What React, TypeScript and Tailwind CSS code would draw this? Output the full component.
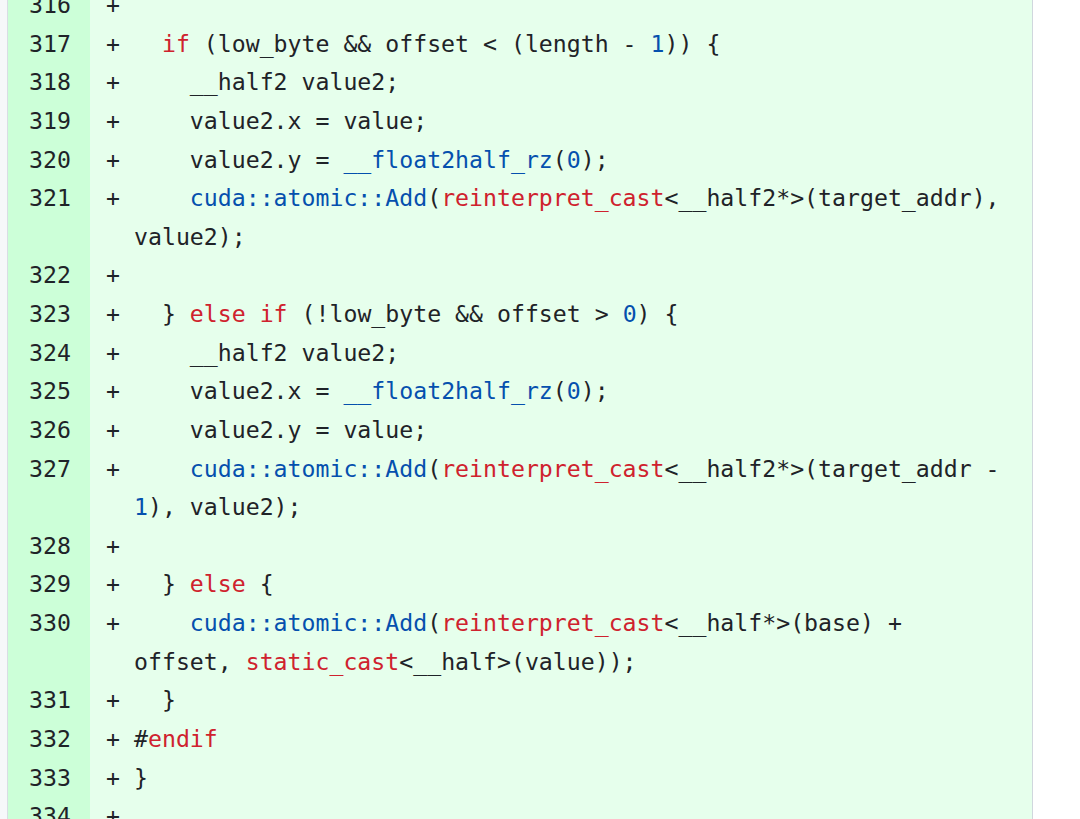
type Tok = [string, 'r' | 'b' | 'd']

const R = (s: string): Tok => [s, 'r']
const B = (s: string): Tok => [s, 'b']
const D = (s: string): Tok => [s, 'd']

const lines: { n: number; toks: Tok[] }[] = [
  { n: 316, toks: [] },
  { n: 317, toks: [D('  '), R('if'), D(' (low_byte && offset < (length - '), B('1'), D(')) {')] },
  { n: 318, toks: [D('    __half2 value2;')] },
  { n: 319, toks: [D('    value2.x = value;')] },
  { n: 320, toks: [D('    value2.y = '), B('__float2half_rz'), D('('), B('0'), D(');')] },
  {
    n: 321,
    toks: [D('    '), B('cuda::atomic::Add'), D('('), R('reinterpret_cast'), D('<__half2*>(target_addr), value2);')]
  },
  { n: 322, toks: [] },
  { n: 323, toks: [D('  } '), R('else if'), D(' (!low_byte && offset > '), B('0'), D(') {')] },
  { n: 324, toks: [D('    __half2 value2;')] },
  { n: 325, toks: [D('    value2.x = '), B('__float2half_rz'), D('('), B('0'), D(');')] },
  { n: 326, toks: [D('    value2.y = value;')] },
  {
    n: 327,
    toks: [D('    '), B('cuda::atomic::Add'), D('('), R('reinterpret_cast'), D('<__half2*>(target_addr - '), B('1'), D('), value2);')]
  },
  { n: 328, toks: [] },
  { n: 329, toks: [D('  } '), R('else'), D(' {')] },
  {
    n: 330,
    toks: [
      D('    '),
      B('cuda::atomic::Add'),
      D('('),
      R('reinterpret_cast'),
      D('<__half*>(base) + offset, '),
      R('static_cast'),
      D('<__half>(value));')
    ]
  },
  { n: 331, toks: [D('  }')] },
  { n: 332, toks: [D('#'), R('endif')] },
  { n: 333, toks: [D('}')] },
  { n: 334, toks: [] }
]

const tone = {
  r: 'text-[#cf222e]',
  b: 'text-[#0550ae]',
  d: 'text-[#1f2328]'
}

export default function App() {
  return (
    <div className="w-[1080px] h-[819px] overflow-hidden bg-white">
      <div
        className="flex -mt-[14px] text-[23.2px] leading-[38.63px] text-[#1f2328]"
        style={{ fontFamily: '"DejaVu Sans Mono", "Liberation Mono", monospace' }}
      >
        <div className="w-[8px] shrink-0 bg-[#f6f8fa] border-r border-[#d8dee4]" />
        <div className="w-[1025px] shrink-0 border-r border-[#d0d7de]">
          {lines.map((line) => (
            <div key={line.n} className="flex">
              <div className="w-[82px] shrink-0 bg-[#ccffd8] text-right pr-[19px]">{line.n}</div>
              <div className="flex-1 flex bg-[#e6ffec] pl-[16px]">
                <span className="w-[28px] shrink-0 whitespace-pre">+</span>
                <div className="w-[875px] whitespace-pre-wrap break-words">
                  {line.toks.map(([text, c], i) => (
                    <span key={i} className={tone[c]}>
                      {text}
                    </span>
                  ))}
                </div>
              </div>
            </div>
          ))}
        </div>
      </div>
    </div>
  )
}
